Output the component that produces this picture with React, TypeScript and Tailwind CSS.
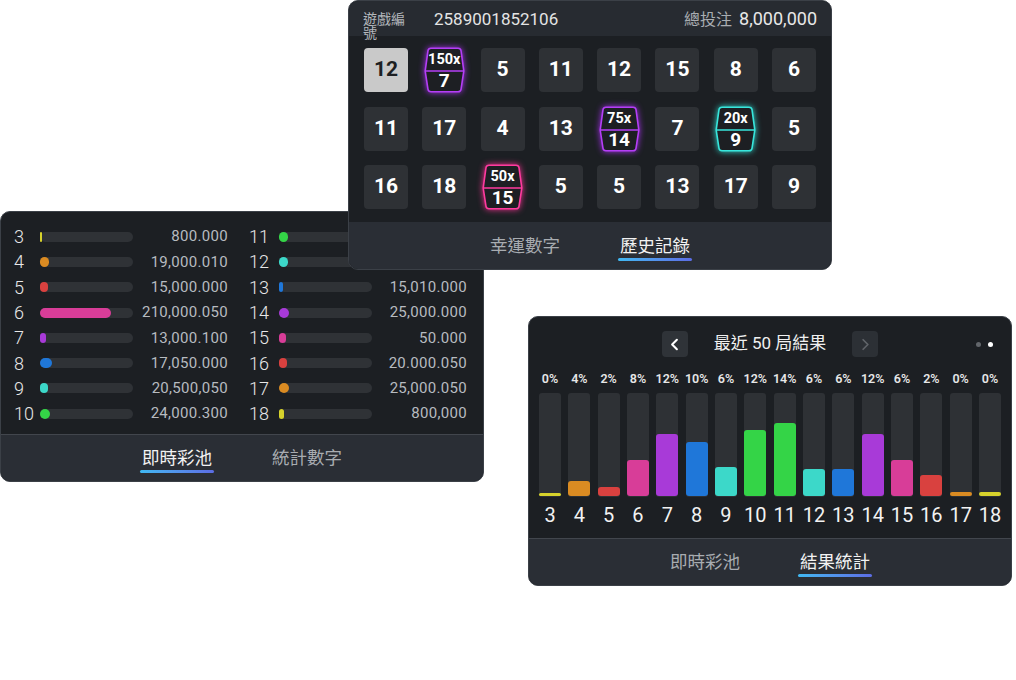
import { ChevronLeft, ChevronRight } from "lucide-react";

const FONT = "font-['Roboto','Noto_Sans_CJK_TC',sans-serif]";

type Tile = number | { mult: string; n: number; tone: "purple" | "cyan" | "pink" };

const rows: Tile[][] = [
  [12, { mult: "150x", n: 7, tone: "purple" }, 5, 11, 12, 15, 8, 6],
  [11, 17, 4, 13, { mult: "75x", n: 14, tone: "purple" }, 7, { mult: "20x", n: 9, tone: "cyan" }, 5],
  [16, 18, { mult: "50x", n: 15, tone: "pink" }, 5, 5, 13, 17, 9],
];

const toneStroke = { purple: "#b53ff7", cyan: "#38e6dc", pink: "#ff3b9f" };
const toneGlow = {
  purple: "drop-shadow-[0_0_3px_#a22fe8]",
  cyan: "drop-shadow-[0_0_3px_#2fd8cf]",
  pink: "drop-shadow-[0_0_3px_#f0308f]",
};

const C = {
  yellow: "bg-[#d6d22c]",
  orange: "bg-[#da8b22]",
  red: "bg-[#d9413f]",
  pink: "bg-[#d83d98]",
  purple: "bg-[#a83ad8]",
  blue: "bg-[#1f77d9]",
  cyan: "bg-[#3cd8c9]",
  green: "bg-[#34d447]",
};

const pool = [
  { n: 3, c: C.yellow, w: 2, v: "800.000" },
  { n: 4, c: C.orange, w: 9, v: "19,000.010" },
  { n: 5, c: C.red, w: 8, v: "15,000.000" },
  { n: 6, c: C.pink, w: 71, v: "210,000.050" },
  { n: 7, c: C.purple, w: 6, v: "13,000.100" },
  { n: 8, c: C.blue, w: 12, v: "17,050.000" },
  { n: 9, c: C.cyan, w: 8, v: "20,500,050" },
  { n: 10, c: C.green, w: 10, v: "24,000.300" },
  { n: 11, c: C.green, w: 9, v: "18,000.000" },
  { n: 12, c: C.cyan, w: 9, v: "22,000.000" },
  { n: 13, c: C.blue, w: 4, v: "15,010.000" },
  { n: 14, c: C.purple, w: 10, v: "25,000.000" },
  { n: 15, c: C.pink, w: 7, v: "50.000" },
  { n: 16, c: C.red, w: 8, v: "20.000.050" },
  { n: 17, c: C.orange, w: 10, v: "25,000.050" },
  { n: 18, c: C.yellow, w: 5, v: "800,000" },
];

const stats = [
  { n: 3, p: "0%", c: C.yellow, h: 3 },
  { n: 4, p: "4%", c: C.orange, h: 15 },
  { n: 5, p: "2%", c: C.red, h: 9 },
  { n: 6, p: "8%", c: C.pink, h: 36 },
  { n: 7, p: "12%", c: C.purple, h: 62 },
  { n: 8, p: "10%", c: C.blue, h: 54 },
  { n: 9, p: "6%", c: C.cyan, h: 29 },
  { n: 10, p: "12%", c: C.green, h: 66 },
  { n: 11, p: "14%", c: C.green, h: 73 },
  { n: 12, p: "6%", c: C.cyan, h: 27 },
  { n: 13, p: "6%", c: C.blue, h: 27 },
  { n: 14, p: "12%", c: C.purple, h: 62 },
  { n: 15, p: "6%", c: C.pink, h: 36 },
  { n: 16, p: "2%", c: C.red, h: 21 },
  { n: 17, p: "0%", c: C.orange, h: 4 },
  { n: 18, p: "0%", c: C.yellow, h: 4 },
];

function Tabs({ items, active }: { items: string[]; active: number }) {
  return (
    <div className="flex h-full items-center justify-center gap-[60px] text-[17.5px] leading-[24px]">
      {items.map((t, i) => (
        <div key={t} className="relative">
          <span className={i === active ? "text-[#f2f2f2]" : "text-[#a8acb1]"}>{t}</span>
          {i === active && (
            <div className="absolute -bottom-[3px] -left-[2px] -right-[2px] h-[3px] rounded-full bg-linear-to-r from-[#3fb8f2] to-[#5b6ce4]" />
          )}
        </div>
      ))}
    </div>
  );
}

function Cell({ t, first }: { t: Tile; first: boolean }) {
  if (typeof t === "number") {
    return (
      <div
        className={`flex h-[44px] w-[44px] items-center justify-center rounded-[4px] text-[21px] font-bold ${
          first ? "bg-[#c9c9c9] text-[#1d1f22]" : "bg-[#2e3135] text-white"
        }`}
      >
        {t}
      </div>
    );
  }
  const s = toneStroke[t.tone];
  return (
    <div className="flex h-[44px] w-[44px] items-center justify-center">
      <div className="relative h-[46px] w-[41px] shrink-0">
        <svg className={`absolute inset-0 ${toneGlow[t.tone]}`} width="41" height="46" viewBox="0 0 41 46" fill="none">
          <path
            d="M7 1.2 H34 Q36.6 1.2 37 3.6 L39.8 24 L37 42.4 Q36.6 44.8 34 44.8 H7 Q4.4 44.8 4 42.4 L1.2 24 L4 3.6 Q4.4 1.2 7 1.2 Z"
            stroke={s}
            strokeWidth="1.6"
            fill="#1d1f23"
          />
          <path d="M1.2 24 H39.8" stroke={s} strokeWidth="1.4" />
        </svg>
        <div className="relative flex h-[24px] items-center justify-center pt-[2px] text-[14.5px] font-bold text-white">
          {t.mult}
        </div>
        <div className="relative flex h-[22px] items-center justify-center pb-[1px] text-[19px] font-bold text-white">
          {t.n}
        </div>
      </div>
    </div>
  );
}

function HistoryPanel() {
  return (
    <div className="absolute left-[348px] top-0 z-20 flex h-[270px] w-[484px] flex-col overflow-hidden rounded-[10px] border border-[#3b4047] bg-[#1c1f23]">
      <div className="flex h-[35px] shrink-0 items-start bg-[#272b31] px-[14px]">
        <div className="w-[71px] pt-[11px]">
          <div className="w-[46px] text-[14px] leading-[14px] text-[#b4b8bd]">遊戲編號</div>
        </div>
        <div className="pt-[8px] text-[17px] leading-[20px] text-[#e4e4e4]">2589001852106</div>
        <div className="ml-auto flex items-baseline gap-[7px] pt-[7px] leading-[22px]">
          <span className="text-[16px] text-[#a9adb2]">總投注</span>
          <span className="text-[18px] text-[#e8e8e8]">8,000,000</span>
        </div>
      </div>
      <div className="grid flex-1 grid-cols-[repeat(8,44px)] content-start justify-between gap-y-[14.5px] px-[15px] pt-[12px]">
        {rows.flatMap((r, ri) => r.map((t, ci) => <Cell key={`${ri}-${ci}`} t={t} first={ri === 0 && ci === 0} />))}
      </div>
      <div className="h-[47px] shrink-0 bg-[#2a2e35]">
        <Tabs items={["幸運數字", "歷史記錄"]} active={1} />
      </div>
    </div>
  );
}

function PoolRow({ r, numW }: { r: (typeof pool)[number]; numW: string }) {
  return (
    <div className="flex h-[25.3px] items-center">
      <div className={`${numW} text-[18px] font-light text-[#e8e8e8]`}>{r.n}</div>
      <div className="h-[10px] flex-1 rounded-full bg-[#2f3236]">
        <div className={`h-full rounded-full ${r.c}`} style={{ width: r.w }} />
      </div>
      <div className="w-[95px] text-right text-[15px] tracking-[0.3px] text-[#b7bbc0]">{r.v}</div>
    </div>
  );
}

function PoolPanel() {
  return (
    <div className="absolute left-0 top-[211px] z-10 flex h-[271px] w-[484px] flex-col overflow-hidden rounded-[10px] border border-[#3b4047] bg-[#1c1f23]">
      <div className="flex gap-[21px] pl-[13px] pt-[12px]">
        <div className="w-[214px]">
          {pool.slice(0, 8).map((r) => (
            <PoolRow key={r.n} r={r} numW="w-[26px]" />
          ))}
        </div>
        <div className="w-[218px]">
          {pool.slice(8).map((r) => (
            <PoolRow key={r.n} r={r} numW="w-[30px]" />
          ))}
        </div>
      </div>
      <div className="mt-auto h-[47px] border-t border-[#42464d] bg-[#2a2e35]">
        <Tabs items={["即時彩池", "統計數字"]} active={0} />
      </div>
    </div>
  );
}

function StatsPanel() {
  return (
    <div className="absolute left-[528px] top-[316px] flex h-[270px] w-[484px] flex-col overflow-hidden rounded-[10px] border border-[#3b4047] bg-[#1c1f23]">
      <div className="relative mt-[14px] flex h-[26px] items-center justify-center gap-[26px]">
        <div className="flex h-[26px] w-[26px] items-center justify-center rounded-[4px] bg-[#2f3338] text-white">
          <ChevronLeft size={19} strokeWidth={2.6} />
        </div>
        <div className="text-[17px] text-[#f0f0f0]">最近 50 局結果</div>
        <div className="flex h-[26px] w-[26px] items-center justify-center rounded-[4px] bg-[#2c3035] text-[#5f6368]">
          <ChevronRight size={19} strokeWidth={2.2} />
        </div>
        <div className="absolute right-[18px] top-[11px] flex gap-[7px]">
          <div className="h-[5px] w-[5px] rounded-full bg-[#62666b]" />
          <div className="h-[5px] w-[5px] rounded-full bg-white" />
        </div>
      </div>
      <div className="mt-[14px] grid grid-cols-16 gap-x-[7.33px] px-[10px]">
        {stats.map((s) => (
          <div key={s.n} className="flex flex-col items-center">
            <div className="h-[16px] text-[12.5px] font-semibold leading-[16px] text-[#e6e6e6]">{s.p}</div>
            <div className="mt-[6px] flex h-[104px] w-[22px] flex-col justify-end rounded-[3px] bg-[#2e3135] pb-[1px]">
              <div className={`w-full rounded-[3px] ${s.c}`} style={{ height: s.h }} />
            </div>
            <div className="mt-[6px] h-[24px] text-[20px] leading-[24px] text-[#f2f2f2]">{s.n}</div>
          </div>
        ))}
      </div>
      <div className="mt-auto h-[47px] border-t border-[#42464d] bg-[#2a2e35]">
        <Tabs items={["即時彩池", "結果統計"]} active={1} />
      </div>
    </div>
  );
}

export default function App() {
  return (
    <div className={`relative h-[680px] w-[1016px] overflow-hidden bg-white ${FONT}`}>
      <PoolPanel />
      <HistoryPanel />
      <StatsPanel />
    </div>
  );
}
